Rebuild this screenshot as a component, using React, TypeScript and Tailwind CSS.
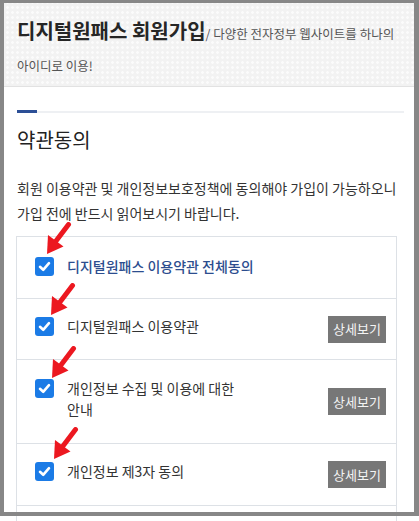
import React from "react";

function Check() {
  return (
    <div className="w-[19px] h-[19px] rounded-[3px] bg-[#1b7be6] flex items-center justify-center shrink-0 mt-[1px]">
      <svg width="15" height="15" viewBox="0 0 15 15">
        <path d="M3 7.8 L6.2 10.8 L12 4.2" fill="none" stroke="#fff" strokeWidth="2.6" strokeLinecap="round" strokeLinejoin="round" />
      </svg>
    </div>
  );
}

function Arrow({ pos }: { pos: string }) {
  return (
    <svg width="28" height="34" viewBox="0 0 28 34" className={"absolute pointer-events-none " + pos}>
      <line x1="23.5" y1="2.5" x2="11" y2="19" stroke="#ec1820" strokeWidth="5" strokeLinecap="round" />
      <polygon points="2,32 18.5,24.5 3,13" fill="#ec1820" />
    </svg>
  );
}

function Row({
  h,
  label,
  blue,
  button,
  arrow,
  mb,
}: {
  h: string;
  label: React.ReactNode;
  blue?: boolean;
  button?: boolean;
  arrow: string;
  mb: string;
}) {
  return (
    <div className={"flex items-center border-b border-[#dde1e6] pl-[18px] " + h}>
      <div className={"flex items-start gap-[13px] " + mb}>
        <div className="relative">
          <Check />
          <Arrow pos={arrow} />
        </div>
        <div
          className={
            blue
              ? "text-[14px] leading-[21px] font-medium text-[#2c4d8e]"
              : "text-[14px] leading-[21px] text-[#333] w-[185px]"
          }
        >
          {label}
        </div>
      </div>
      {button && (
        <button className="ml-auto mr-[10px] w-[58px] h-[27px] bg-[#777777] text-[#f4f4f4] text-[13px] flex items-center justify-center">
          상세보기
        </button>
      )}
    </div>
  );
}

export default function App() {
  return (
    <div className="relative w-[419px] h-[521px] overflow-hidden bg-white break-keep font-['Noto_Sans_CJK_KR','Noto_Sans',sans-serif]">
      <header className="bg-[#f2f2f2] bg-[radial-gradient(circle,#fbfbfb_1.2px,transparent_1.5px)] bg-[length:5px_5px] border-b border-[#e2e2e2] pl-[17px] pr-[15px] pt-[15px] pb-[7px]">
        <h1 className="text-[20px] leading-[32px] font-bold text-[#262626]">
          디지털원패스 회원가입
          <span className="text-[12.5px] font-normal text-[#555] leading-[16px]">
            / 다양한 전자정부 웹사이트를 하나의 아이디로 이용!
          </span>
        </h1>
      </header>

      <div className="pl-[17px] pr-[15px]">
        <div className="flex items-end mt-[23px]">
          <div className="w-[20px] h-[3px] bg-[#2c4f96]" />
          <div className="flex-1 h-[2px] bg-[#eef0f3]" />
        </div>
        <h2 className="mt-[13px] text-[20px] leading-[28px] text-[#222]">약관동의</h2>
        <p className="mt-[22px] text-[14px] leading-[25px] text-[#333]">
          회원 이용약관 및 개인정보보호정책에 동의해야 가입이 가능하오니 가입 전에 반드시 읽어보시기 바랍니다.
        </p>

        <div className="mt-[10px] -ml-[1px] w-[381px] border-x border-t border-[#dde1e6]">
          <Row h="h-[62px]" mb="mb-[3px]" blue label="디지털원패스 이용약관 전체동의" arrow="left-[10px] top-[-34px]" />
          <Row h="h-[61px]" mb="mb-[6px]" button label="디지털원패스 이용약관" arrow="left-[14px] top-[-33px]" />
          <Row h="h-[84px]" mb="mb-[5px]" button label="개인정보 수집 및 이용에 대한 안내" arrow="left-[15px] top-[-32px]" />
          <Row h="h-[62px]" mb="mb-[6px]" button label="개인정보 제3자 동의" arrow="left-[17px] top-[-34px]" />
          <div className="h-[62px]" />
        </div>
      </div>

      <div className="absolute top-0 left-0 w-[419px] h-[516px] border-t-[3px] border-l-[4px] border-r-[5px] border-b-[4px] border-[#878787] pointer-events-none z-10" />
    </div>
  );
}
